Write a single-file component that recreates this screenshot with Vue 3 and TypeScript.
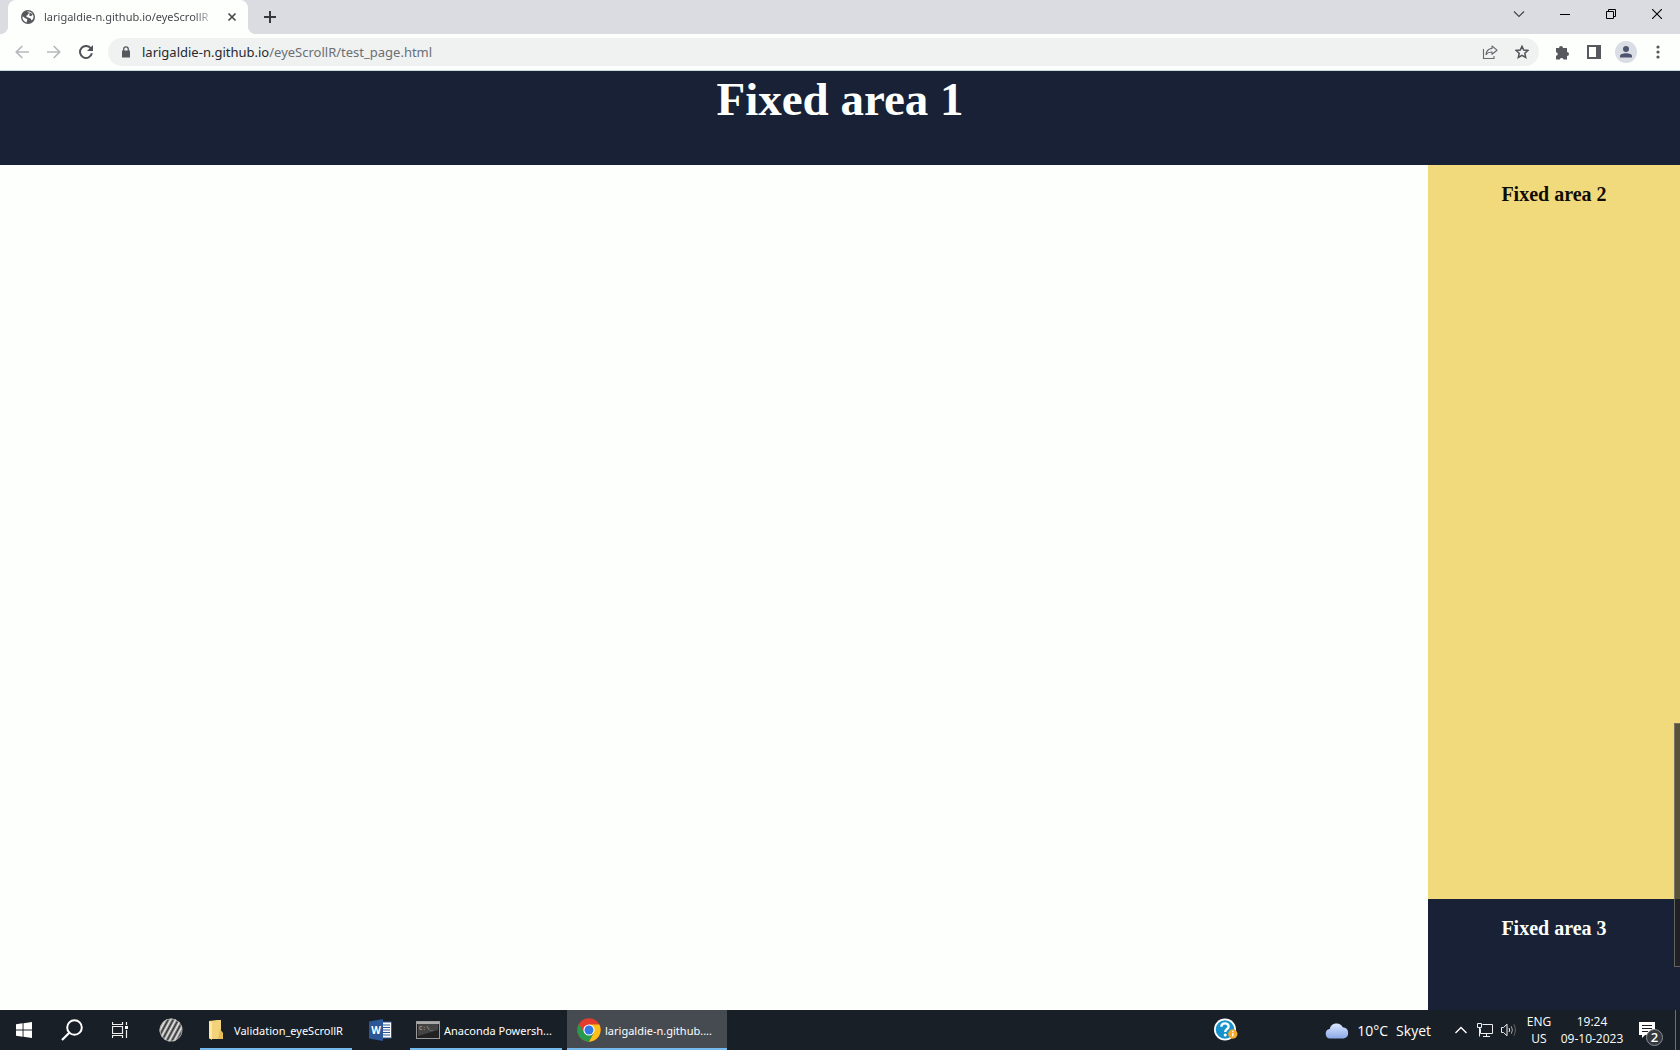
<script setup lang="ts">
import { ref } from 'vue'

const address = ref('larigaldie-n.github.io/eyeScrollR/test_page.html')
const host = 'larigaldie-n.github.io'
const path = '/eyeScrollR/test_page.html'
</script>

<template>
  <div class="screen">
    <header class="browser">
      <div class="tabstrip">
        <div class="tab">
          <svg class="favicon" viewBox="0 0 14 14" width="14" height="14">
            <circle cx="7" cy="7" r="7" fill="#55595d" />
            <path d="M1.6 6.3 L4.6 8.6 C6 8.5 6.6 9.4 6.1 10.3 L5.6 12.4 C2.8 11.7 1 9 1.6 6.3Z" fill="#fcfffc" />
            <path d="M6 1.7 C9.5 1 12.6 3.6 12.5 7.2 C12.2 8.6 11.6 9.7 10.7 10.6 L9.6 8.6 L6.4 7.3 C4.8 7 4.9 5.3 6.5 5.3 L7.2 3.7 L9 3 Z" fill="#fcfffc" />
            <path d="M8.8 2.4 L11.8 4.6 L10 6.3 L8.2 5.6 Z" fill="#55595d" />
          </svg>
          <span class="tab-title">{{ host }}/eyeScrollR</span>
          <button class="tab-close" aria-label="Close tab">
            <svg viewBox="0 0 10 10" width="10" height="10"><path d="M1.5 1.5 L8.5 8.5 M8.5 1.5 L1.5 8.5" stroke="#45494d" stroke-width="1.7" /></svg>
          </button>
        </div>
        <button class="new-tab" aria-label="New tab">
          <svg viewBox="0 0 12 12" width="12" height="12"><path d="M6 0 V12 M0 6 H12" stroke="#35393d" stroke-width="2" /></svg>
        </button>
        <div class="window-buttons">
          <button aria-label="Search tabs"><svg viewBox="0 0 12 12" width="12" height="12"><path d="M1 3.5 L6 8.5 L11 3.5" fill="none" stroke="#404448" stroke-width="1.1" /></svg></button>
          <button aria-label="Minimize"><svg viewBox="0 0 10 10" width="10" height="10"><path d="M0 5.5 H10" stroke="#000" /></svg></button>
          <button aria-label="Restore"><svg viewBox="0 0 10 10" width="10" height="10"><path d="M0.5 2.5 H7.5 V9.5 H0.5 Z M2.5 2.5 V0.5 H9.5 V7.5 H7.5" fill="none" stroke="#000" /></svg></button>
          <button aria-label="Close window"><svg viewBox="0 0 10 10" width="10" height="10"><path d="M0 0 L10 10 M10 0 L0 10" stroke="#000" stroke-width="1.1" /></svg></button>
        </div>
      </div>

      <div class="toolbar">
        <button class="nav" aria-label="Back"><svg viewBox="0 0 14 14" width="14" height="14"><path d="M14 7 H1.5 M7.3 1 L1.3 7 L7.3 13" fill="none" stroke="#b5b9bb" stroke-width="1.7" /></svg></button>
        <button class="nav" aria-label="Forward"><svg viewBox="0 0 14 14" width="14" height="14"><path d="M0 7 H12.5 M6.7 1 L12.7 7 L6.7 13" fill="none" stroke="#b5b9bb" stroke-width="1.7" /></svg></button>
        <button class="nav" aria-label="Reload"><svg viewBox="0 0 14 14" width="14" height="14"><path d="M11.8 3.3 A6 6 0 1 0 12.9 8.3" fill="none" stroke="#505458" stroke-width="2" /><path d="M14 0 V6 H8 Z" fill="#505458" /></svg></button>
        <div class="omnibox">
          <svg class="lock" viewBox="0 0 10 12" width="10" height="12"><path d="M1 4.5 H9 V11.5 H1 Z" fill="#55595d" /><path d="M2.7 5 V3.2 A2.3 2.3 0 0 1 7.3 3.2 V5" fill="none" stroke="#55595d" stroke-width="1.3" /></svg>
          <div class="url">
            <span aria-hidden="true"><b>{{ host }}</b>{{ path }}</span>
            <input v-model="address" aria-label="Address" spellcheck="false" />
          </div>
          <button aria-label="Share"><svg viewBox="0 0 16 14" width="16" height="14"><path d="M1.5 4 V13.5 H12 V11" fill="none" stroke="#65696d" stroke-width="1.1" /><path d="M10 1 L15 5.2 L10 9.3 V7 C7.5 6.9 5.5 7.7 4 9.6 C4.4 6 6.4 3.8 10 3.4 Z" fill="none" stroke="#65696d" stroke-width="1.1" stroke-linejoin="round" /></svg></button>
          <button aria-label="Bookmark"><svg viewBox="0 0 14 14" width="14" height="14"><path d="M7 1.3 L8.7 5.1 L13 5.5 L9.8 8.3 L10.7 12.5 L7 10.3 L3.3 12.5 L4.2 8.3 L1 5.5 L5.3 5.1 Z" fill="none" stroke="#505458" stroke-width="1.5" /></svg></button>
        </div>
        <div class="tools">
          <button aria-label="Extensions"><svg viewBox="0 0 15 15" width="15" height="15"><path d="M1 3 H4 A2 2 0 1 1 8 3 H12 V7 A2 2 0 1 1 12 11 V14.5 H8.5 A1.9 1.9 0 0 0 4.8 14.5 H1 V10.8 A1.8 1.8 0 0 0 1 7.2 Z" fill="#55595d" /></svg></button>
          <button aria-label="Side panel"><svg viewBox="0 0 14 14" width="14" height="14"><path d="M0 0 H14 V14 H0 Z M2 2 V12 H9 V2 Z" fill="#55595d" fill-rule="evenodd" /></svg></button>
          <button aria-label="Profile"><svg viewBox="0 0 22 22" width="22" height="22"><circle cx="11" cy="11" r="11" fill="#dadde4" /><circle cx="11" cy="8" r="3" fill="#4d566e" /><path d="M5 16.5 V15 C5 11.3 17 11.3 17 15 V16.5 Z" fill="#4d566e" /></svg></button>
          <button aria-label="Menu"><svg viewBox="0 0 4 14" width="4" height="14"><g fill="#55595d"><circle cx="2" cy="2" r="1.6" /><circle cx="2" cy="7" r="1.6" /><circle cx="2" cy="12" r="1.6" /></g></svg></button>
        </div>
      </div>
    </header>

    <main class="page">
      <section class="area-one"><h1>Fixed area 1</h1></section>
      <div class="columns">
        <div class="content"></div>
        <aside class="side">
          <section class="area-two"><h2>Fixed area 2</h2></section>
          <section class="area-three"><h2>Fixed area 3</h2></section>
        </aside>
      </div>
      <div class="thumb"></div>
    </main>

    <footer class="taskbar">
      <button class="pin" aria-label="Start"><svg viewBox="0 0 16 16" width="16" height="16"><path d="M0 2.3 L6.6 1.3 V7.5 H0 Z M7.5 1.2 L16 0 V7.5 H7.5 Z M0 8.4 H6.6 V14.7 L0 13.7 Z M7.5 8.4 H16 V16 L7.5 14.8 Z" fill="#fff" /></svg></button>
      <button class="pin" aria-label="Search"><svg viewBox="0 0 22 22" width="22" height="22"><circle cx="13.5" cy="8.5" r="7.3" fill="none" stroke="#fff" stroke-width="2" /><path d="M8.3 13.7 L1 21" stroke="#fff" stroke-width="2.2" /></svg></button>
      <button class="pin" aria-label="Task view"><svg viewBox="0 0 16 16" width="16" height="16"><path d="M0.5 0 V2.5 H10.5 V0 M0.5 16 V13.5 H10.5 V16 M0.5 4.5 H10.5 V11.5 H0.5 Z M14.5 0 V3 M14.5 8 V16" fill="none" stroke="#eee" stroke-width="1.2" /><path d="M13 4 H16 V7 H13 Z" fill="#fff" /></svg></button>
      <button class="pin ball" aria-label="Gabor">
        <svg viewBox="0 0 24 24" width="24" height="24">
          <defs>
            <linearGradient id="stripe" x1="0" y1="0" x2="3.9" y2="2.1" gradientUnits="userSpaceOnUse" spreadMethod="repeat"><stop offset="0" stop-color="#2c2c2c" /><stop offset=".5" stop-color="#f0f0f0" /><stop offset="1" stop-color="#2c2c2c" /></linearGradient>
          </defs>
          <circle cx="12" cy="12" r="11.5" fill="url(#stripe)" />
          <circle cx="12" cy="12" r="11" fill="none" stroke="#bbb" stroke-opacity=".7" />
        </svg>
      </button>
      <button class="task folder">
        <svg viewBox="0 0 14 20" width="14" height="20"><path d="M0 1 L8 0 H12 V17 L14 19 H1 L0 18 Z" fill="#f2d27a" /><path d="M0 1 L3 2.5 V20 L0 18 Z" fill="#ffe79c" /><path d="M11 9 L14 13 V19 H9 Z" fill="#e6bd58" /></svg>
        <span>Validation_eyeScrollR</span>
      </button>
      <button class="pin word" aria-label="Word">
        <svg viewBox="0 0 24 22" width="24" height="22"><path d="M12 3 H22.5 V19 H12 Z" fill="#fff" stroke="#2b579a" /><path d="M14 6 H21 M14 8.5 H21 M14 11 H21 M14 13.5 H21 M14 16 H21" stroke="#2b579a" stroke-width="1.2" /><path d="M0 2.5 L14 0 V22 L0 19.5 Z" fill="#2b5797" /><text x="7" y="15" text-anchor="middle" font-family="Open Sans, sans-serif" font-weight="700" font-size="10" fill="#fff">W</text></svg>
      </button>
      <button class="task console">
        <svg viewBox="0 0 24 18" width="24" height="18"><rect x=".5" y=".5" width="23" height="17" fill="#222" stroke="#9a9a9a" /><path d="M1 1 H23 V3 H1 Z" fill="#aaa" /><path d="M2 3 H22 V9 L2 15 Z" fill="#444" /><text x="3" y="9" font-family="Liberation Mono, monospace" font-size="6" fill="#bbb">C:\_</text></svg>
        <span>Anaconda Powersh...</span>
      </button>
      <button class="task chrome">
        <svg viewBox="0 0 24 24" width="24" height="24"><circle cx="12" cy="12" r="11.7" fill="#e33b2e" /><path d="M12 6.5 H22.3 A11.7 11.7 0 0 1 11.8 23.7 L16.8 14.8 Z" fill="#fbc116" /><path d="M1.9 6.1 L7.2 14.8 L12 17.5 L16.8 14.8 L11.8 23.7 A11.7 11.7 0 0 1 1.9 6.1 Z" fill="#269b4b" /><circle cx="12" cy="12" r="5.6" fill="#fff" /><circle cx="12" cy="12" r="4.5" fill="#3277e6" /></svg>
        <span>larigaldie-n.github....</span>
      </button>
      <div class="tray">
        <button class="help" aria-label="Help"><svg viewBox="0 0 24 24" width="24" height="24"><circle cx="11" cy="11.5" r="11" fill="#fff" /><circle cx="11" cy="11.5" r="9.3" fill="#1792cb" /><path d="M7.4 8.8 C7.4 4.2 14.8 4.4 14.6 8.6 C14.5 11 11.2 11 11.2 14" fill="none" stroke="#fff" stroke-width="2.4" /><circle cx="11.2" cy="17" r="1.5" fill="#fff" /><circle cx="18.8" cy="16" r="4.7" fill="#f2a92c" /><path d="M18.8 15.2 V18.6 M18.8 12.8 V14.2" stroke="#fff" stroke-width="1.4" /></svg></button>
        <button class="weather">
          <svg viewBox="0 0 24 17" width="24" height="17"><defs><linearGradient id="sky" x1="0" y1="0" x2="0" y2="1"><stop offset="0" stop-color="#dce8ff" /><stop offset="1" stop-color="#8aa8ea" /></linearGradient></defs><path d="M5 16.5 A4.8 4.8 0 0 1 4.7 7 A7 7 0 0 1 17.7 5.2 A5.7 5.7 0 0 1 18.5 16.5 Z" fill="url(#sky)" /></svg>
          <span>10°C</span><span>Skyet</span>
        </button>
        <button class="icon" aria-label="Hidden icons"><svg viewBox="0 0 12 8" width="12" height="8"><path d="M0.5 7 L6 1.5 L11.5 7" fill="none" stroke="#fff" stroke-width="1.4" /></svg></button>
        <button class="icon" aria-label="Network"><svg viewBox="0 0 16 14" width="16" height="14"><path d="M5.5 1.5 H15.5 V10.5 H3.5 V5.5 M0.5 0.5 H4.5 V4.5 H0.5 Z M2.5 4.5 V13.5 M9.5 10.5 V13.5 M6 13.5 H13" fill="none" stroke="#eee" /></svg></button>
        <button class="icon" aria-label="Volume"><svg viewBox="0 0 16 14" width="16" height="14"><path d="M0.5 4.5 H2.5 L6 1.2 V12.8 L2.5 9.5 H0.5 Z" fill="none" stroke="#eee" /><path d="M8 5 Q9.3 7 8 9" fill="none" stroke="#eee" /><path d="M10.3 3.3 Q12.5 7 10.3 10.7" fill="none" stroke="#aaa" /><path d="M12.8 1.3 Q16 7 12.8 12.7" fill="none" stroke="#666" /></svg></button>
        <button class="stack language"><span>ENG</span><span>US</span></button>
        <button class="stack clock"><span>19:24</span><span>09-10-2023</span></button>
        <button class="notices" aria-label="Notifications, 2 new">
          <svg viewBox="0 0 24 25" width="24" height="25"><path d="M0 0 H16 V13 H6 L3 16 V13 H0 Z" fill="#fff" /><path d="M3 3.5 H13 M3 6.5 H13 M3 9.5 H9" stroke="#191f26" stroke-width="1.2" /><circle cx="15.5" cy="15.5" r="8" fill="#34393f" stroke="#8b8f93" /><text x="15.5" y="20" text-anchor="middle" font-family="Open Sans, sans-serif" font-weight="600" font-size="13" fill="#fff">2</text></svg>
        </button>
        <button class="desktop" aria-label="Show desktop"></button>
      </div>
    </footer>
  </div>
</template>

<style>
body {
  margin: 0;
}
</style>

<style scoped>
.screen {
  display: flex;
  flex-direction: column;
  min-height: 100vh;
  font-family: "Noto Sans", "Open Sans", sans-serif;
  background: #fcfffc;
}
button {
  display: flex;
  align-items: center;
  justify-content: center;
  flex: none;
  margin: 0;
  padding: 0;
  border: 0;
  background: none;
  color: inherit;
  font: inherit;
}
svg {
  display: block;
  flex: none;
}
.tabstrip {
  display: flex;
  height: 34px;
  padding-left: 8px;
  background: #dadce1;
}
.tab {
  position: relative;
  display: flex;
  align-items: center;
  box-sizing: border-box;
  width: 240px;
  padding: 0 10px 0 13px;
  border-radius: 8px 8px 0 0;
  background: #fcfffc;
}
.tab::before,
.tab::after {
  content: "";
  position: absolute;
  bottom: 0;
  width: 8px;
  height: 8px;
}
.tab::before {
  right: 100%;
  background: radial-gradient(circle at 0 0, transparent 8px, #fcfffc 8px);
}
.tab::after {
  left: 100%;
  background: radial-gradient(circle at 100% 0, transparent 8px, #fcfffc 8px);
}
.tab-title {
  flex: 1;
  margin-left: 9px;
  overflow: hidden;
  white-space: nowrap;
  font-size: 11px;
  line-height: 16px;
  color: #45494d;
  mask-image: linear-gradient(to right, #000 150px, transparent 172px);
}
.tab-close {
  width: 12px;
  height: 16px;
  margin-left: 10px;
}
.new-tab {
  width: 28px;
  margin-left: 8px;
}
.window-buttons {
  display: flex;
  height: 28px;
  margin-left: auto;
}
.window-buttons button {
  width: 46px;
}
.toolbar {
  display: flex;
  align-items: center;
  height: 36px;
  padding-left: 6px;
  border-bottom: 1px solid #c9dadb;
}
.nav {
  width: 32px;
  height: 28px;
}
.omnibox {
  display: flex;
  flex: 1;
  align-items: center;
  height: 28px;
  margin-left: 6px;
  padding: 0 1px 0 13px;
  border-radius: 14px;
  background: #f0f2f2;
}
.omnibox button {
  width: 32px;
  height: 28px;
}
.url {
  position: relative;
  flex: 1;
  margin-left: 11px;
  font-size: 13px;
  line-height: 20px;
  color: #6b6f73;
}
.url b {
  font-weight: 400;
  color: #25292d;
}
.url input {
  position: absolute;
  inset: 0;
  width: 100%;
  padding: 0;
  border: 0;
  outline: 0;
  background: none;
  color: transparent;
  font: inherit;
}
.tools {
  display: flex;
  margin: 0 6px 0 7px;
}
.tools button {
  width: 32px;
  height: 28px;
}
.page {
  position: relative;
  display: flex;
  flex: 1;
  flex-direction: column;
  font-family: "Liberation Serif", "Times New Roman", serif;
  text-align: center;
}
.area-one {
  flex: 10 0 0;
  background: #182135;
  color: #fcfffc;
}
h1 {
  margin: 0;
  font-size: 47px;
  line-height: 56px;
}
.columns {
  display: flex;
  flex: 90 0 0;
}
.content {
  flex: 1;
}
.side {
  display: flex;
  flex-direction: column;
  width: 15%;
}
h2 {
  margin: 0;
  padding-top: 17px;
  font-size: 20px;
  line-height: 24px;
}
.area-two {
  flex: 734 0 0;
  background: #f1da7b;
  color: #100c04;
}
.area-three {
  flex: 111 0 0;
  background: #182135;
  color: #fcfffc;
}
.thumb {
  position: absolute;
  top: 69.4%;
  right: 0;
  box-sizing: border-box;
  width: 6px;
  height: 26%;
  border: 1px solid rgba(130, 130, 120, 0.7);
  border-right: 0;
  background: rgba(34, 34, 34, 0.74);
}
.taskbar {
  display: flex;
  height: 40px;
  background: #191f26;
  color: #fff;
  font-family: "Open Sans", "Noto Sans", sans-serif;
  font-size: 12px;
  white-space: nowrap;
}
.pin {
  width: 48px;
}
.ball {
  width: 54px;
}
.task {
  box-sizing: border-box;
  justify-content: flex-start;
  width: 152px;
  border-bottom: 2px solid #76b9ed;
  padding-top: 2px;
  font-family: "Noto Sans", "Open Sans", sans-serif;
  font-size: 11px;
}
.folder {
  margin-left: 2px;
  padding-left: 9px;
  gap: 11px;
}
.word {
  width: 58px;
}
.console {
  padding-left: 6px;
  gap: 4px;
}
.chrome {
  width: 160px;
  margin-left: 5px;
  padding-left: 10px;
  gap: 4px;
  background: #464b51;
}
.tray {
  display: flex;
  margin-left: auto;
}
.help {
  width: 24px;
  margin-right: 87px;
}
.weather {
  gap: 8px;
  margin-right: 18px;
  font-size: 14px;
}
.icon {
  width: 24px;
}
.stack {
  flex-direction: column;
  line-height: 17px;
}
.language {
  width: 36px;
}
.clock {
  width: 70px;
}
.notices {
  align-items: flex-start;
  width: 48px;
  padding-top: 12px;
}
.desktop {
  width: 5px;
  border-left: 1px solid #6b7075;
}
</style>
